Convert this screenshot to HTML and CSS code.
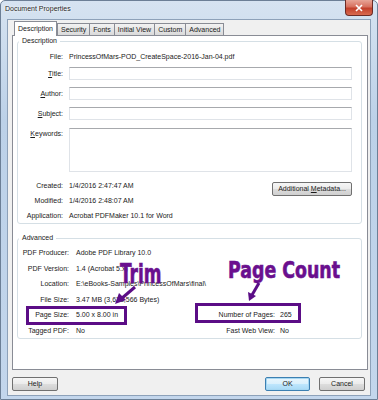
FILE: index.html
```html
<!DOCTYPE html>
<html>
<head>
<meta charset="utf-8">
<link rel="stylesheet" href="styles.css">
</head>
<body>
<div class="window">
  <div class="titlebar">
    <span class="title">Document Properties</span>
    <span class="close"><svg width="10" height="8" viewBox="0 0 10 8"><path d="M2 1 L8 7 M8 1 L2 7" stroke="#fff" stroke-width="1.6"/></svg></span>
  </div>
  <div class="client">
    <div class="tabs">
      <div class="tab active">Description</div>
      <div class="tab">Security</div>
      <div class="tab">Fonts</div>
      <div class="tab">Initial View</div>
      <div class="tab">Custom</div>
      <div class="tab">Advanced</div>
    </div>
    <div class="panel">
      <fieldset class="group desc">
        <legend>Description</legend>
        <div class="form">
          <div class="lbl file-lbl">File:</div><div class="val file-val">PrincessOfMars-POD_CreateSpace-2016-Jan-04.pdf</div>
          <div class="lbl in-lbl"><u>T</u>itle:</div><div class="input"></div>
          <div class="lbl in-lbl"><u>A</u>uthor:</div><div class="input"></div>
          <div class="lbl in-lbl"><u>S</u>ubject:</div><div class="input"></div>
          <div class="lbl kw-lbl"><u>K</u>eywords:</div><div class="input tall"></div>
        </div>
        <div class="meta">
          <div class="lbl">Created:</div><div class="val">1/4/2016 2:47:47 AM</div>
          <div class="btn meta-btn">Additional <u>M</u>etadata...</div>
          <div class="lbl">Modified:</div><div class="val">1/4/2016 2:48:07 AM</div>
          <div class="lbl">Application:</div><div class="val">Acrobat PDFMaker 10.1 for Word</div>
        </div>
      </fieldset>
      <fieldset class="group adv">
        <legend>Advanced</legend>
        <div class="adv-grid">
          <div class="lbl">PDF Producer:</div><div class="val span">Adobe PDF Library 10.0</div>
          <div class="lbl">PDF Version:</div><div class="val span">1.4 (Acrobat 5.x)</div>
          <div class="lbl">Location:</div><div class="val span">E:\eBooks-Samples\PrincessOfMars\final\</div>
          <div class="lbl">File Size:</div><div class="val span">3.47 MB (3,638,566 Bytes)</div>
          <div class="lbl">Page Size:</div><div class="val">5.00 x 8.00 in</div>
          <div class="lbl rlbl">Number of Pages:</div><div class="val rval">265</div>
          <div class="lbl">Tagged PDF:</div><div class="val">No</div>
          <div class="lbl rlbl">Fast Web View:</div><div class="val rval">No</div>
        </div>
      </fieldset>
    </div>
    <div class="buttons">
      <div class="btn dlg">Help</div>
      <div class="spacer"></div>
      <div class="btn dlg ok">OK</div>
      <div class="btn dlg">Cancel</div>
    </div>
  </div>
  <div class="annot">
    <div class="ann-text trim">Trim</div>
    <div class="ann-text count">Page Count</div>
    <svg class="ann-svg" width="378" height="400" viewBox="0 0 378 400">
      <g stroke="#5b0d86" fill="none" stroke-width="3">
        <rect x="27.5" y="307.5" width="98" height="16"/>
        <rect x="196.5" y="304.5" width="103" height="17"/>
        <line x1="135" y1="287" x2="121" y2="299"/>
        <line x1="259" y1="283" x2="252" y2="295"/>
      </g>
      <g fill="#5b0d86">
        <polygon points="115,304 126,300 119,293"/>
        <polygon points="249,301 256,296 248,292"/>
      </g>
    </svg>
  </div>
</div>
</body>
</html>
```

FILE: styles.css
```css
* { box-sizing: border-box; }
html, body { margin: 0; padding: 0; }
body {
  width: 378px;
  height: 400px;
  overflow: hidden;
  font-family: "Liberation Sans", Arial, sans-serif;
  font-size: 7px;
  color: #1a1a1a;
}
.window {
  position: relative;
  width: 378px;
  height: 400px;
  background: linear-gradient(180deg, #d6e3f1 0%, #bcd1e8 30%, #c3d6ec 100%);
  border: 1px solid #6c7f96;
  border-radius: 5px 5px 0 0;
  display: flex;
  flex-direction: column;
}
.titlebar {
  height: 18px;
  display: flex;
  align-items: flex-start;
  padding-left: 4px;
}
.title {
  font-family: "Liberation Sans", Arial, sans-serif;
  font-size: 7px;
  color: #1e1e1e;
  margin-top: 4px;
  text-shadow: 0 0 3px #fff, 0 0 2px #fff;
}
.close {
  margin-left: auto;
  margin-right: 4px;
  width: 28px;
  height: 16px;
  margin-top: -1px;
  border: 1px solid #6b2b25;
  border-top: none;
  border-radius: 0 0 4px 4px;
  background: linear-gradient(180deg, #e8a597 0%, #d7705e 45%, #c2402b 55%, #d86a4f 100%);
  display: flex;
  align-items: center;
  justify-content: center;
}
.client {
  margin: 0 6px 0 6px;
  height: 377px;
  background: #f0f0f0;
  border: 1px solid #8da1b9;
  padding: 1px 2px 3px 4px;
  display: flex;
  flex-direction: column;
}
.tabs {
  display: flex;
  align-items: flex-end;
  height: 14px;
  padding-left: 2px;
  position: relative;
  z-index: 2;
}
.tab {
  height: 12px;
  line-height: 11px;
  padding: 0 3px;
  border: 1px solid #898c95;
  border-bottom: none;
  margin-right: -1px;
  background: linear-gradient(180deg, #f2f2f2 0%, #e6e6e6 50%, #dadada 100%);
  white-space: nowrap;
}
.tab.active {
  height: 15px;
  margin-bottom: -1px;
  line-height: 13px;
  padding: 0 3px;
  background: #fff;
  margin-right: 0;
  position: relative;
  z-index: 3;
}
.panel {
  height: 335px;
  background: #fff;
  border: 1px solid #898c95;
  padding: 0 5px 0 4px;
}
.group {
  margin: 0;
  border: 1px solid #d5dfe5;
  border-radius: 3px;
  min-width: 0;
}
.group legend {
  padding: 0 3px;
  margin-left: 1px;
  line-height: 10px;
  height: 10px;
  font-size: 7px;
  color: #1a1a1a;
}
.desc { padding: 5px 9px 0 0; height: 188px; }
.adv { padding: 2px 0 0 0; height: 106px; margin-top: 9px; }
.form {
  display: grid;
  grid-template-columns: 45px 1fr;
  grid-template-rows: 16px 20px 20px 21px 45px;
  column-gap: 6px;
}
.lbl { text-align: right; white-space: nowrap; }
.val { white-space: nowrap; }
.file-lbl, .file-val { line-height: 12px; }
.in-lbl { line-height: 13px; }
.kw-lbl { line-height: 11px; }
.input {
  height: 13px;
  border: 1px solid #dfe3e8;
  border-top-color: #a7a9ad;
  background: #fff;
}
.input.tall { height: 44px; }
.meta {
  margin-top: 5px;
  display: grid;
  grid-template-columns: 45px 1fr auto;
  grid-auto-rows: 15px;
  column-gap: 6px;
  line-height: 15px;
}
.meta .lbl { grid-column: 1; }
.meta .val { grid-column: 2; }
.meta-btn {
  grid-column: 3;
  grid-row: 1 / 3;
  align-self: start;
  margin-top: 4px;
  width: 80px;
}
.btn {
  height: 14px;
  line-height: 12px;
  text-align: center;
  border: 1px solid #707070;
  border-radius: 2px;
  background: linear-gradient(180deg, #f6f6f6 0%, #ebebeb 50%, #dddddd 51%, #cfcfcf 100%);
  white-space: nowrap;
  color: #1a1a1a;
}
.adv-grid {
  display: grid;
  grid-template-columns: 51px 131px 75px 1fr;
  grid-auto-rows: 15.6px;
  line-height: 15.6px;
}
.adv-grid .lbl { grid-column: 1; }
.adv-grid .val { grid-column: 2; padding-left: 7px; }
.adv-grid .val.span { grid-column: 2 / -1; }
.adv-grid .rlbl { grid-column: 3; }
.adv-grid .rval { grid-column: 4; padding-left: 5px; }
.buttons {
  display: flex;
  margin-top: 7px;
  height: 14px;
  padding-right: 3px;
}
.spacer { flex: 1; }
.dlg { width: 46px; }
.ok {
  border-color: #3c7fb1;
  box-shadow: inset 0 0 0 1px #a6d7f2;
  background: linear-gradient(180deg, #eaf6fd 0%, #d9f0fc 50%, #bee6fd 51%, #a7d9f5 100%);
  margin-right: 9px;
  width: 45px;
}
.annot {
  position: absolute;
  left: -1px;
  top: -1px;
  width: 378px;
  height: 400px;
  pointer-events: none;
}
.ann-svg { position: absolute; left: 0; top: 0; }
.ann-text {
  position: absolute;
  font-family: "DejaVu Sans Condensed", "DejaVu Sans", sans-serif;
  font-stretch: condensed;
  font-weight: bold;
  color: #6a0f8e;
  -webkit-text-stroke: 0.6px #6a0f8e;
  line-height: 1;
  white-space: nowrap;
  transform-origin: left top;
}
.trim {
  left: 120px;
  top: 260px;
  font-size: 27px;
  transform: scaleX(0.7);
}
.count {
  left: 228px;
  top: 259px;
  font-size: 23px;
  transform: scaleX(0.84);
}
```
